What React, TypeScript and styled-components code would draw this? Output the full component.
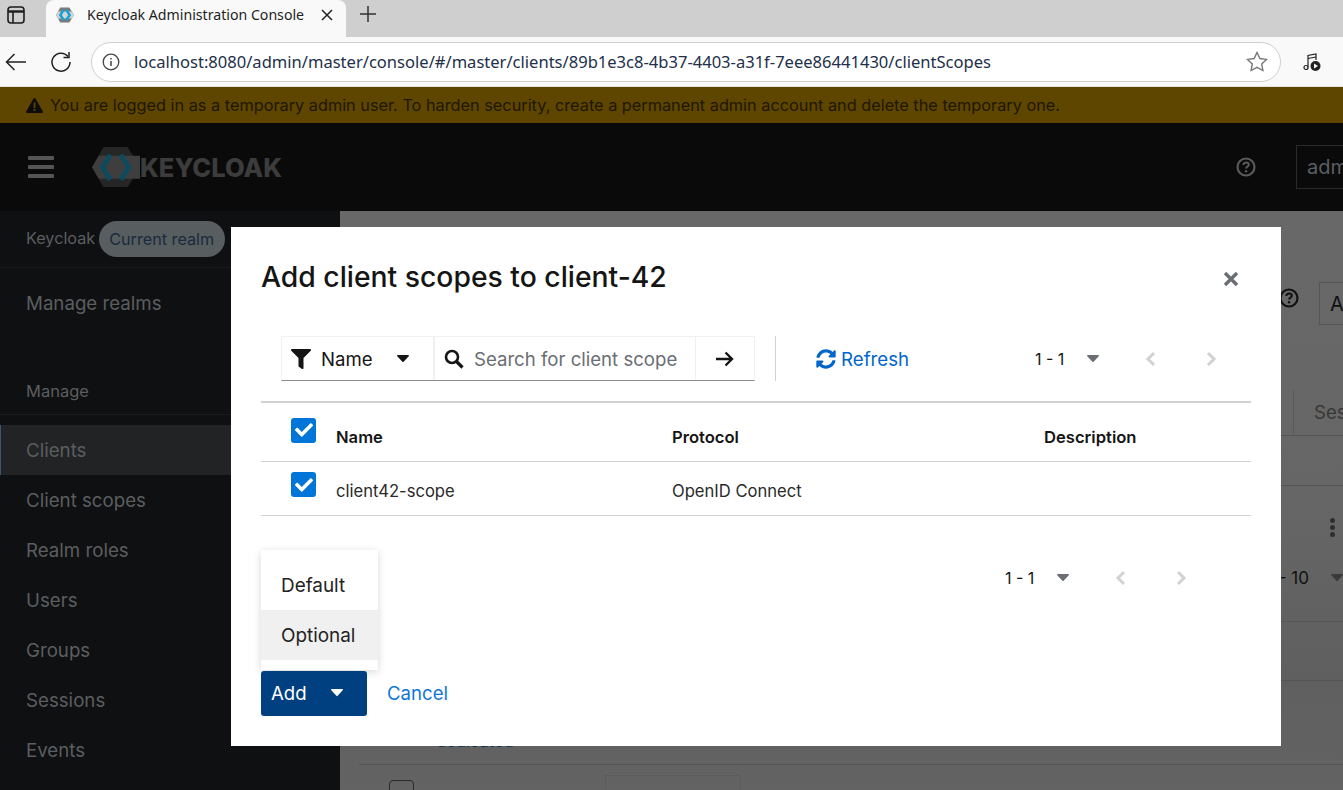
import React from "react";
import styled, { createGlobalStyle } from "styled-components";

const Global = createGlobalStyle`
  html, body { margin: 0; padding: 0; height: 790px; overflow: hidden; background: #666; }
  #root { height: 790px; }
  * { box-sizing: border-box; }
`;

const FONT = `"Inter", "Open Sans", "Liberation Sans", sans-serif`;
const CHROME = `"Noto Sans", "Open Sans", "Liberation Sans", sans-serif`;

const Page = styled.div`
  position: relative;
  width: 1343px;
  height: 790px;
  overflow: hidden;
  display: flex;
  flex-direction: column;
  font-family: ${FONT};
`;

const TabStrip = styled.div`
  height: 37px;
  background: #cfcfcf;
  display: flex;
  align-items: flex-end;
  flex: none;
`;
const WindowBtn = styled.div`
  width: 46px;
  height: 37px;
  display: flex;
  align-items: center;
  padding: 0 0 7px 7px;
  border-bottom-right-radius: 8px;
  color: #1c1c1c;
`;
const ActiveTab = styled.div`
  width: 300px;
  height: 37px;
  background: #f9f9f9;
  border-radius: 8px 8px 0 0;
  display: flex;
  align-items: center;
  padding: 0 13px 7px 10px;
  font: 14.15px ${CHROME};
  color: #1f1f1f;
`;
const TabTitle = styled.span`
  margin: 0 0 2px 13px;
  flex: 1;
  white-space: nowrap;
`;
const NewTab = styled.div`
  margin-left: 13px;
  height: 37px;
  display: flex;
  align-items: center;
  padding-bottom: 9px;
`;

const Toolbar = styled.div`
  height: 50px;
  flex: none;
  background: #f9f9f9;
  display: flex;
  align-items: center;
  padding: 0 0 0 5px;
  border-bottom: 1px solid #e2e2e2;
`;
const NavBtn = styled.div`
  width: 45px;
  display: flex;
  align-items: center;
  justify-content: flex-start;
  color: #222;
`;
const Omni = styled.div`
  width: 1190px;
  height: 40px;
  border: 1.5px solid #cfcfcf;
  border-radius: 20px;
  background: #fff;
  display: flex;
  align-items: center;
  padding: 0 12px 0 10px;
  margin-left: -4px;
`;
const Url = styled.span`
  flex: 1;
  margin-left: 14px;
  font: 16.56px ${CHROME};
  color: #22304a;
  white-space: nowrap;
`;
const Extension = styled.div`
  margin-left: 22px;
  display: flex;
  align-items: center;
`;

const Banner = styled.div`
  height: 36px;
  flex: none;
  background: #5e4500;
  display: flex;
  align-items: center;
  padding-left: 26px;
  font-size: 16.3px;
  color: #1e1700;
  white-space: nowrap;
`;
const BannerText = styled.span`
  margin-left: 7px;
`;

const Masthead = styled.header`
  height: 88px;
  flex: none;
  background: #0a0a0a;
  display: flex;
  align-items: center;
  padding-left: 28px;
`;
const Burger = styled.div`
  width: 26px;
  flex: none;
  display: flex;
  flex-direction: column;
  gap: 5px;
  & > i {
    display: block;
    height: 4px;
    background: #555;
    border-radius: 1px;
  }
`;
const Logo = styled.div`
  margin-left: 38px;
  display: flex;
  align-items: center;
  width: 1144px;
  flex: none;
`;
const LogoWord = styled.span`
  font: 800 25.5px "Inter", sans-serif;
  color: #3c3c3c;
`;
const MastHelp = styled.div`
  display: flex;
  color: #5a5a5a;
  margin-right: 40px;
  flex: none;
`;
const UserBox = styled.div`
  width: 60px;
  flex: none;
  height: 44px;
  border: 1px solid #2b2b2b;
  border-right: none;
  display: flex;
  align-items: center;
  padding-left: 10px;
  font-size: 20px;
  color: #5a5f63;
  overflow: hidden;
`;

const Body = styled.div`
  flex: 1;
  display: flex;
  min-height: 0;
`;
const Sidebar = styled.nav`
  width: 340px;
  flex: none;
  background: #0f1012;
  display: flex;
  flex-direction: column;
  color: #5b5e60;
  font-size: 18.7px;
`;
const RealmRow = styled.div`
  height: 57px;
  flex: none;
  display: flex;
  align-items: center;
  padding: 0 0 3px 26px;
  border-bottom: 1px solid #1a1b1e;
  font-size: 16.2px;
`;
const RealmPill = styled.span`
  margin: 3px 0 0 4px;
  height: 36px;
  padding: 0 11px 0 10px;
  border-radius: 18px;
  background: #585d60;
  color: #1b2a3c;
  display: flex;
  align-items: center;
  white-space: nowrap;
`;
const ManageRealms = styled.div`
  height: 72px;
  flex: none;
  display: flex;
  align-items: center;
  padding: 0 0 1px 26px;
  margin-bottom: 16px;
`;
const GroupTitle = styled.div`
  height: 59px;
  flex: none;
  padding: 24px 0 0 26px;
  font-size: 16.5px;
  border-bottom: 1px solid #1a1b1e;
  margin-bottom: 10px;
  line-height: 22px;
`;
const NavItem = styled.div<{ $active?: boolean }>`
  height: 50px;
  flex: none;
  display: flex;
  align-items: center;
  padding-left: 26px;
  background: ${(p) => (p.$active ? "#212325" : "transparent")};
  border-left: ${(p) => (p.$active ? "1px solid #3a5570" : "none")};
  text-indent: ${(p) => (p.$active ? "-1px" : "0")};
`;

const Main = styled.main`
  flex: 1;
  background: linear-gradient(180deg, #686868 0%, #666 50%, #5f5f5f 80%, #636363 100%);
  display: flex;
  flex-direction: column;
  align-items: stretch;
  padding-left: 19px;
  min-width: 0;
  position: relative;
`;
const Crumb = styled.div`
  height: 60px;
  flex: none;
  padding: 10px 0 0 0;
  margin-left: -15px;
`;
const TitleRow = styled.div`
  height: 119px;
  flex: none;
  display: flex;
  justify-content: flex-end;
  align-items: flex-start;
  padding-top: 11px;
  color: #111;
`;
const HelpSlot = styled.div`
  margin-top: 6px;
  margin-right: 20px;
  display: flex;
`;
const ActionBox = styled.div`
  width: 24px;
  height: 43px;
  border: 1px solid #555;
  border-right: none;
  display: flex;
  align-items: center;
  padding-left: 10px;
  font-size: 20px;
  color: #111;
  overflow: hidden;
`;
const TabsRow = styled.div`
  height: 46px;
  flex: none;
  border-bottom: 1px solid #555;
  display: flex;
  justify-content: flex-end;
`;
const BgTab = styled.div`
  width: 50px;
  border-left: 1px solid #5a5a5a;
  padding: 0 0 2px 20px;
  display: flex;
  align-items: center;
  font-size: 18.6px;
  color: #383838;
  overflow: hidden;
  white-space: nowrap;
`;
const BgRow = styled.div<{ $h: number }>`
  height: ${(p) => p.$h}px;
  flex: none;
  border-bottom: 1px solid #555;
  position: relative;
`;
const BgListRow = styled(BgRow)`
  display: flex;
  flex-direction: column;
  align-items: flex-end;
  padding-top: 32px;
`;
const Kebab = styled.div`
  display: flex;
  flex-direction: column;
  gap: 2px;
  margin-right: 8px;
  & > i {
    width: 5px;
    height: 5px;
    border-radius: 50%;
    background: #2e2e2e;
  }
`;
const BgPager = styled.div`
  display: flex;
  align-items: center;
  font-size: 17px;
  color: #111;
  gap: 22px;
  height: 20px;
  margin-top: 31px;
  white-space: nowrap;
`;
const BgRowLink = styled.span`
  position: absolute;
  left: 77px;
  bottom: 13px;
  font-size: 16.5px;
  color: #04304f;
`;
const BottomRow = styled.div`
  display: flex;
  align-items: flex-start;
  padding: 15px 0 0 30px;
`;
const BgCheck = styled.div`
  width: 25px;
  height: 25px;
  border: 1px solid #2a2a2a;
  border-radius: 4px;
`;
const BgInput = styled.div`
  margin-left: 191px;
  margin-top: -5px;
  width: 136px;
  height: 30px;
  border: 1px solid #5c5c5c;
`;

const Modal = styled.section`
  position: absolute;
  left: 231px;
  top: 227px;
  width: 1050px;
  height: 519px;
  background: #fff;
  display: flex;
  flex-direction: column;
  padding: 0 30px;
  color: #151515;
`;
const ModalHead = styled.div`
  height: 109px;
  flex: none;
  display: flex;
  justify-content: space-between;
  align-items: flex-start;
`;
const ModalTitle = styled.h1`
  margin: 30px 0 0 0;
  font: 450 28.3px/40px ${FONT};
  color: #151515;
  white-space: nowrap;
`;
const CloseBtn = styled.div`
  margin: 44px 12px 0 0;
  color: #6a6e73;
  display: flex;
`;
const ToolRow = styled.div`
  height: 67px;
  flex: none;
  display: flex;
  align-items: flex-start;
  padding-left: 20px;
  border-bottom: 2px solid #d2d2d2;
`;
const SearchGroup = styled.div`
  display: flex;
  height: 45px;
  border: 1px solid #f0f0f0;
  border-bottom: 1px solid #8a8d90;
`;
const FilterPart = styled.div`
  width: 153px;
  display: flex;
  align-items: center;
  padding-left: 9px;
  font-size: 18.6px;
  color: #151515;
  border-right: 2px solid #f0f0f0;
`;
const FilterLabel = styled.span`
  margin-left: 10px;
  width: 76px;
`;
const SearchPart = styled.div`
  width: 261px;
  display: flex;
  align-items: center;
  padding-left: 9px;
  font-size: 18.6px;
  color: #6a6e73;
  border-right: 1px solid #f0f0f0;
  white-space: nowrap;
`;
const SearchText = styled.span`
  margin-left: 10px;
`;
const GoPart = styled.div`
  flex: 1;
  width: 58px;
  display: flex;
  align-items: center;
  justify-content: center;
`;
const Divider = styled.div`
  width: 1px;
  height: 45px;
  background: #d2d2d2;
  margin-left: 20px;
`;
const Refresh = styled.div`
  margin: 11px 0 0 40px;
  height: 24px;
  display: flex;
  align-items: center;
  gap: 5px;
  font-size: 18.7px;
  color: #0066cc;
  white-space: nowrap;
`;
const Pager = styled.div`
  margin-left: auto;
  padding-right: 34px;
  display: flex;
  align-items: center;
  font-size: 16px;
  color: #151515;
  height: 45px;
  white-space: nowrap;
`;
const PagerCount = styled.span`
  width: 52px;
`;
const PagerNav = styled.div`
  display: flex;
  align-items: center;
  color: #d2d2d2;
  margin-left: 46px;
  gap: 48px;
`;
const TableHead = styled.div`
  height: 59px;
  flex: none;
  display: grid;
  grid-template-columns: 75px 336px 372px 1fr;
  align-items: center;
  border-bottom: 1px solid #d2d2d2;
  font-size: 16.6px;
  font-weight: 600;
`;
const TableRow = styled(TableHead)`
  height: 54px;
  font-weight: 400;
  color: #2a2a2a;
`;
const CheckCell = styled.div<{ $up: number }>`
  padding-left: 30px;
  margin-top: -${(p) => p.$up}px;
  display: flex;
`;
const Check = styled.div`
  width: 25px;
  height: 25px;
  border-radius: 3px;
  background: #0275d8;
  display: flex;
  align-items: center;
  justify-content: center;
`;
const Cell = styled.div<{ $down: number }>`
  padding-top: ${(p) => p.$down}px;
`;
const Footer = styled.div`
  position: relative;
  flex: 1;
`;
const FooterPager = styled.div`
  position: absolute;
  top: 39px;
  left: 744px;
  display: flex;
  align-items: center;
  font-size: 16px;
  height: 45px;
  white-space: nowrap;
`;
const Menu = styled.div`
  position: absolute;
  left: 0;
  top: 34px;
  width: 117px;
  height: 120px;
  background: #fff;
  padding: 10px 0;
  box-shadow: 0 2px 8px rgba(3, 3, 3, 0.16);
  font-size: 18.9px;
`;
const MenuItem = styled.div<{ $hover?: boolean }>`
  height: 50px;
  display: flex;
  align-items: center;
  padding-left: 20px;
  background: ${(p) => (p.$hover ? "#f0f0f0" : "#fff")};
  color: #222;
`;
const Actions = styled.div`
  position: absolute;
  left: 0;
  top: 155px;
  display: flex;
  align-items: center;
`;
const AddBtn = styled.div`
  width: 106px;
  height: 45px;
  border-radius: 3px;
  background: #004080;
  color: #fff;
  display: flex;
  align-items: center;
  padding: 0 0 1px 10px;
  font-size: 18.6px;
`;
const AddLabel = styled.span`
  width: 60px;
`;
const CancelLink = styled.span`
  margin: -1px 0 0 20px;
  font-size: 18.6px;
  color: #0f76d8;
`;

const Tick = () => (
  <svg width="18" height="18" viewBox="0 0 512 512" fill="#fff">
    <path d="M173.9 439.4 7.5 273c-10-10-10-26.200 0-36.200l36.200-36.200c10-10 26.200-10 36.200 0L192 312.700 432.100 72.600c10-10 26.200-10 36.200 0l36.200 36.200c10 10 10 26.200 0 36.200L210.100 439.400c-10 10-26.200 10-36.200 0z" />
  </svg>
);
const Caret = ({ color = "#151515", size = 12 }: { color?: string; size?: number }) => (
  <svg width={size} height={size * 0.6} viewBox="0 0 10 6" fill={color}>
    <path d="M.7 0h8.600c.6 0 .9.700.5 1.100L5.500 5.700a.7.7 0 0 1-1 0L.2 1.100C-.2.700.1 0 .7 0z" />
  </svg>
);
const Chevron = ({ dir }: { dir: "l" | "r" }) => (
  <svg width="12" height="16" viewBox="0 0 12 16" fill="none" stroke="#d2d2d2" strokeWidth="3">
    <path d={dir === "l" ? "M9 2 3 8l6 6" : "M3 2l6 6-6 6"} />
  </svg>
);
const Help = ({ size = 20, color = "currentColor" }: { size?: number; color?: string }) => (
  <svg width={size} height={size} viewBox="0 0 20 20" fill="none">
    <circle cx="10" cy="10" r="8.500" stroke={color} strokeWidth="2.200" />
    <path d="M7.300 8c0-1.600 1.200-2.500 2.800-2.500s2.700 1 2.700 2.200c0 2-2.700 1.900-2.700 3.800" stroke={color} strokeWidth="2" />
    <circle cx="10.100" cy="14.300" r="1.200" fill={color} />
  </svg>
);
const LogoMark = ({ w }: { w: number }) => (
  <svg width={w} height={w * 0.84} viewBox="0 0 50 42">
    <path d="M0 21 12 0h25l13 21-13 21H12z" fill="#262626" />
    <path d="M0 21 7 9h43v24H7z" fill="#3e3e3e" />
    <path d="M19 8 11 21l8 13" fill="none" stroke="#0c4a5e" strokeWidth="5" />
    <path d="M30 8l8 13-8 13" fill="none" stroke="#0c4a5e" strokeWidth="5" />
  </svg>
);
const Favicon = () => (
  <svg width="18" height="16" viewBox="0 0 50 42">
    <path d="M0 21 12 0h25l13 21-13 21H12z" fill="#7b7b7b" />
    <path d="M0 21 6 11h38l6 10-6 10H6z" fill="#d5d5d5" />
    <path d="M21 7 12 21l9 14" fill="none" stroke="#12a5d8" strokeWidth="7" />
    <path d="M29 7l9 14-9 14" fill="none" stroke="#12a5d8" strokeWidth="7" />
  </svg>
);

const PagerBlock = () => (
  <>
    <PagerCount>1 - 1</PagerCount>
    <Caret color="#6a6e73" />
    <PagerNav>
      <Chevron dir="l" />
      <Chevron dir="r" />
    </PagerNav>
  </>
);

export default function App() {
  return (
    <Page>
      <Global />
      <TabStrip>
        <WindowBtn>
          <svg width="18" height="18" viewBox="0 0 18 18" fill="none" stroke="#1c1c1c" strokeWidth="1.600">
            <rect x="1" y="1" width="16" height="16" rx="3" />
            <path d="M1 5.500h16" strokeWidth="2.400" />
            <path d="M6 5.500V17" />
          </svg>
        </WindowBtn>
        <ActiveTab>
          <Favicon />
          <TabTitle>Keycloak Administration Console</TabTitle>
          <svg width="12" height="12" viewBox="0 0 12 12" stroke="#222" strokeWidth="1.500">
            <path d="M1 1l10 10M11 1 1 11" />
          </svg>
        </ActiveTab>
        <NewTab>
          <svg width="18" height="18" viewBox="0 0 18 18" stroke="#333" strokeWidth="1.500">
            <path d="M9 1v16M1 9h16" />
          </svg>
        </NewTab>
      </TabStrip>
      <Toolbar>
        <NavBtn>
          <svg width="22" height="18" viewBox="0 0 22 18" fill="none" stroke="#222" strokeWidth="1.500">
            <path d="M21 9H1.500M9.500 1 1.500 9l8 8" />
          </svg>
        </NavBtn>
        <NavBtn>
          <svg width="22" height="22" viewBox="0 0 22 22" fill="none" stroke="#222" strokeWidth="1.500">
            <path d="M18 5.500A9 9 0 1 0 20 11" />
            <path d="M19 1v5.500h-5.500" />
          </svg>
        </NavBtn>
        <Omni>
          <svg width="18" height="18" viewBox="0 0 18 18" fill="none" stroke="#444" strokeWidth="1.300">
            <circle cx="9" cy="9" r="7.800" />
            <path d="M9 8v5M9 5v1.500" strokeWidth="1.500" />
          </svg>
          <Url>localhost:8080/admin/master/console/#/master/clients/89b1e3c8-4b37-4403-a31f-7eee86441430/clientScopes</Url>
          <svg width="22" height="21" viewBox="0 0 22 21" fill="none" stroke="#777" strokeWidth="1.400">
            <path d="m11 1.500 2.900 6 6.600.9-4.800 4.600 1.200 6.500-5.900-3.200-5.900 3.200 1.200-6.500L1.500 8.400l6.600-.9z" />
          </svg>
        </Omni>
        <Extension>
          <svg width="18" height="20" viewBox="0 0 18 20" fill="none" stroke="#222" strokeWidth="1.200">
            <circle cx="3" cy="15.500" r="2" />
            <path d="M5 15.500V3.500l8-1.500v6" />
            <path d="M5 6.500 13 5" />
            <circle cx="12.500" cy="14" r="5" fill="#222" stroke="none" />
            <path d="M11 11.500v5l4-2.500z" fill="#fff" stroke="none" />
          </svg>
        </Extension>
      </Toolbar>
      <Banner>
        <svg width="17" height="15" viewBox="0 0 17 15" fill="#0c0c0c">
          <path d="M8.500 0a1 1 0 0 1 .9.500l7.400 13a1 1 0 0 1-.9 1.500H1.100a1 1 0 0 1-.9-1.500L7.600.5a1 1 0 0 1 .9-.5z" />
          <rect x="7.600" y="4.500" width="1.800" height="5.500" fill="#5e4500" />
          <rect x="7.600" y="11" width="1.800" height="1.800" fill="#5e4500" />
        </svg>
        <BannerText>You are logged in as a temporary admin user. To harden security, create a permanent admin account and delete the temporary one.</BannerText>
      </Banner>
      <Masthead>
        <Burger>
          <i />
          <i />
          <i />
        </Burger>
        <Logo>
          <LogoMark w={48} />
          <LogoWord>KEYCLOAK</LogoWord>
        </Logo>
        <MastHelp>
          <Help size={20} color="#5a5a5a" />
        </MastHelp>
        <UserBox>admin</UserBox>
      </Masthead>
      <Body>
        <Sidebar>
          <RealmRow>
            Keycloak
            <RealmPill>Current realm</RealmPill>
          </RealmRow>
          <ManageRealms>Manage realms</ManageRealms>
          <GroupTitle>Manage</GroupTitle>
          <NavItem $active>Clients</NavItem>
          <NavItem>Client scopes</NavItem>
          <NavItem>Realm roles</NavItem>
          <NavItem>Users</NavItem>
          <NavItem>Groups</NavItem>
          <NavItem>Sessions</NavItem>
          <NavItem>Events</NavItem>
        </Sidebar>
        <Main>
          <Crumb>
            <svg width="10" height="6" viewBox="0 0 10 6" fill="#444">
              <path d="M0 6 4 .5a1.200 1.200 0 0 1 2 0L10 6z" />
            </svg>
          </Crumb>
          <TitleRow>
            <HelpSlot>
              <Help size={20} color="#111" />
            </HelpSlot>
            <ActionBox>Action</ActionBox>
          </TitleRow>
          <TabsRow>
            <BgTab>Sessions</BgTab>
          </TabsRow>
          <BgRow $h={50} />
          <BgListRow $h={136}>
            <Kebab>
              <i />
              <i />
              <i />
            </Kebab>
            <BgPager>
              1 - 10
              <Caret color="#3a3a3a" />
            </BgPager>
          </BgListRow>
          <BgRow $h={59} />
          <BgRow $h={84}>
            <BgRowLink>dedicated</BgRowLink>
          </BgRow>
          <BottomRow>
            <BgCheck />
            <BgInput />
          </BottomRow>
        </Main>
      </Body>
      <Modal>
        <ModalHead>
          <ModalTitle>Add client scopes to client-42</ModalTitle>
          <CloseBtn>
            <svg width="16" height="16" viewBox="0 0 16 16" stroke="#6a6e73" strokeWidth="3.400">
              <path d="M2 2l12 12M14 2 2 14" />
            </svg>
          </CloseBtn>
        </ModalHead>
        <ToolRow>
          <SearchGroup>
            <FilterPart>
              <svg width="20" height="20" viewBox="0 0 512 512" fill="#151515">
                <path d="M487 0H25C3 0-9 27 7 43l185 185v206c0 8 4 15 10 20l80 56c16 11 38 0 38-20V228L505 43c16-16 4-43-18-43z" />
              </svg>
              <FilterLabel>Name</FilterLabel>
              <Caret />
            </FilterPart>
            <SearchPart>
              <svg width="20" height="20" viewBox="0 0 20 20" fill="none" stroke="#151515" strokeWidth="2.600">
                <circle cx="8" cy="8" r="6" />
                <path d="m12.500 12.500 6 6" strokeWidth="3.200" />
              </svg>
              <SearchText>Search for client scope</SearchText>
            </SearchPart>
            <GoPart>
              <svg width="18" height="16" viewBox="0 0 18 16" fill="none" stroke="#151515" strokeWidth="2.400">
                <path d="M0 8h16M9.500 1.500 16 8l-6.500 6.500" />
              </svg>
            </GoPart>
          </SearchGroup>
          <Divider />
          <Refresh>
            <svg width="20" height="20" viewBox="0 0 512 512" fill="#0066cc">
              <path d="M370.700 133.300C339.500 104 298.900 88 255.800 88c-77.500 0-144.400 53.100-162.800 126.900-1.300 5.400-6.100 9.200-11.700 9.200H24.100c-7.500 0-13.200-6.800-11.800-14.200C33.900 94.900 134.800 8 256 8c66.400 0 126.800 26.100 171.300 68.700L463 41C478.100 25.900 504 36.600 504 57.900V192c0 13.300-10.700 24-24 24H345.900c-21.400 0-32.100-25.900-17-41l41.800-41.700zM32 296h134.100c21.400 0 32.100 25.900 17 41l-41.800 41.800c31.300 29.300 71.800 45.300 114.900 45.200 77.400-.1 144.300-53.100 162.800-126.900 1.300-5.400 6.100-9.200 11.700-9.200h57.300c7.500 0 13.200 6.800 11.800 14.200C478.100 417.100 377.200 504 256 504c-66.400 0-126.800-26.100-171.300-68.700L49 471C33.900 486.100 8 475.400 8 454.100V320c0-13.300 10.700-24 24-24z" />
            </svg>
            Refresh
          </Refresh>
          <Pager>
            <PagerBlock />
          </Pager>
        </ToolRow>
        <TableHead>
          <CheckCell $up={4}>
            <Check>
              <Tick />
            </Check>
          </CheckCell>
          <Cell $down={10}>Name</Cell>
          <Cell $down={10}>Protocol</Cell>
          <Cell $down={10}>Description</Cell>
        </TableHead>
        <TableRow>
          <CheckCell $up={8}>
            <Check>
              <Tick />
            </Check>
          </CheckCell>
          <Cell $down={4}>client42-scope</Cell>
          <Cell $down={4}>OpenID Connect</Cell>
          <div />
        </TableRow>
        <Footer>
          <FooterPager>
            <PagerBlock />
          </FooterPager>
          <Menu>
            <MenuItem>Default</MenuItem>
            <MenuItem $hover>Optional</MenuItem>
          </Menu>
          <Actions>
            <AddBtn>
              <AddLabel>Add</AddLabel>
              <Caret color="#fff" />
            </AddBtn>
            <CancelLink>Cancel</CancelLink>
          </Actions>
        </Footer>
      </Modal>
    </Page>
  );
}
